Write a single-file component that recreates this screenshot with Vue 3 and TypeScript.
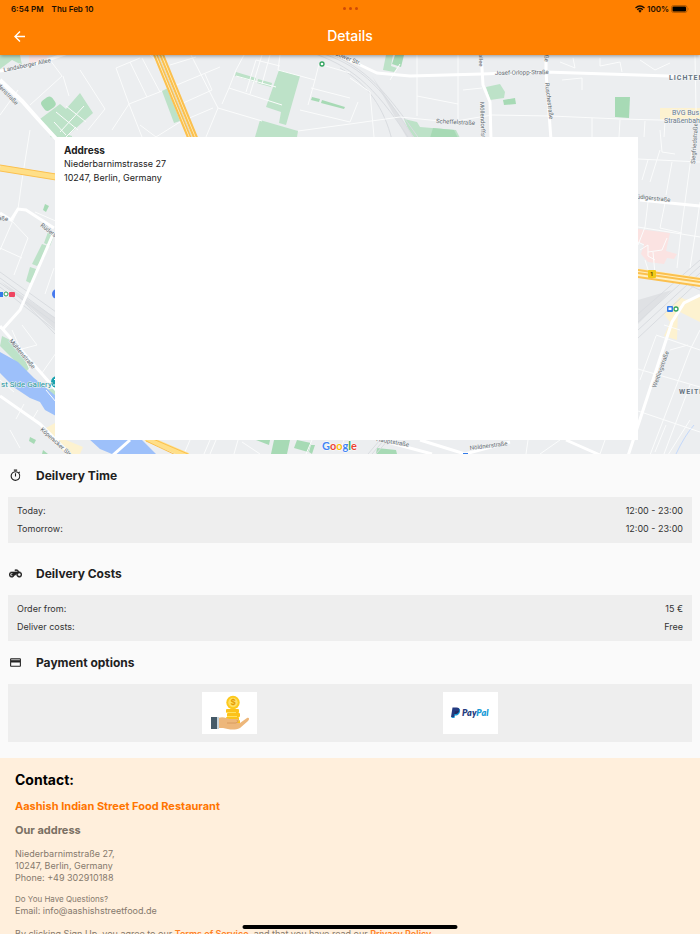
<script setup lang="ts">
interface Row {
  label: string
  value: string
}

interface MapLabel {
  text: string
  x: number
  y: number
  angle: number
  kind?: string
}

const deliveryTimes: Row[] = [
  { label: 'Today:', value: '12:00 - 23:00' },
  { label: 'Tomorrow:', value: '12:00 - 23:00' },
]

const deliveryCosts: Row[] = [
  { label: 'Order from:', value: '15 €' },
  { label: 'Deliver costs:', value: 'Free' },
]

const minorRoads: string[] = [
  'M62 76 L50 60 M62 76 L30 105 M69 96 L63 76 M80 70 L105 109 L88 130 M0 115 L18 90',
  'M116 68 L140 58 M116 68 L129 104 L162 91 M129 104 L142 137 M129 104 L112 130 M140 125 L156 137 L180 122 L213 108 M130 62 L147 97 M142 58 L160 92 M158 62 L150 55 M172 87 L220 67 M181 104 L212 90 M170 65 L196 57 M191 55 L218 108 L262 121 M205 74 L212 90 M218 108 L206 137',
  'M229 88 L236 70 L244 55 M229 88 L282 105 M236 76 L276 87 M222 104 L229 88 M246 92 L256 60 L280 66 M262 55 L250 94 M270 55 L262 84 M280 55 L278 70 L315 80 L319 64 L350 73 M315 80 L308 105 M311 88 L350 98 M298 131 L350 124 L400 117 M300 110 L350 122',
  'M417 55 L417 116 M417 96 L458 104 M458 55 L458 120 M463 90 L482 88 M350 78 L370 92 L374 137 M358 102 L350 122 M400 64 L390 80 M560 62 L575 68 L573 58 M600 58 L600 66 L620 62 L622 72 M640 60 L655 70 L670 63 M562 80 L582 78 L582 90 M592 118 L592 137 M620 120 L619 137 M645 121 L644 137 M665 122 L664 137 M695 55 L696 110',
  'M400 117 L450 122 L492 115 L551 116 L620 119 L700 121',
  'M30 130 L22 180 L18 209 M18 209 L0 250 M35 212 L58 222 M11 220 L28 238 L14 275 M0 248 L22 258 M54 268 L45 294 M22 325 L37 345 L18 350 M12 330 L30 370 M42 373 L56 353 M38 410 L32 420 M24 404 L16 419 M10 430 L20 448 M46 390 L56 402 M0 380 L14 392',
  'M638 159 L700 162 M648 160 L642 180 M660 130 L662 152 L675 154 M650 182 L660 150 M672 162 L666 195 M648 202 L645 227 L638 245 M666 198 L660 228 L682 233 M700 202 L690 268 M692 150 L681 232 L677 268 M638 227 L700 237 M638 242 L644 245 M645 260 L650 276 M655 274 L653 252',
  'M638 369 L700 387 M638 411 L700 432 M656 335 L700 350 M656 336 L640 380 M700 330 L690 350 L650 455 M670 350 L688 345 M690 420 L668 455 M666 425 L655 452 M690 385 L664 454 M605 440 L600 454 M664 325 L680 330',
  'M190 440 L184 454 M210 440 L204 454 M216 440 L210 454 M238 440 L234 454 M242 442 L260 454 M528 440 L526 454 M560 440 L540 454 M340 450 L344 440 M312 440 L306 454',
]

const mainRoads: string[] = [
  'M0 71 L30 66 L68 53',
  'M330 52 L356 63 L377 73 L410 76 L482 74 L545 72 L700 77',
  'M481 52 L483 85 L490 102 L491 140',
  'M546 52 L546 72 L551 140',
  'M0 213 L11 220 L18 209 L26 210 L54 228 M54 232 L20 310 L2 330',
  'M0 326 L56 390',
  'M0 396 L40 424 L70 454',
  'M130 440 L112 456',
  'M700 295 L684 303 L672 322 L628 456',
  'M640 200 L700 206',
  'M566 440 L600 455 M380 440 L432 454 M420 440 L465 454 L510 442',
]

const railLines: string[] = [
  'M310 52 C350 66 372 82 410 140',
  'M318 52 C356 64 380 82 415 140',
  'M326 52 C366 68 385 90 420 140',
  'M340 68 C368 84 384 108 392 140',
  'M0 272 L56 312',
  'M0 278 L56 319',
  'M0 283 L56 324',
  'M0 287 L56 331',
  'M24 302 L56 335',
  'M700 260 L638 314',
  'M700 266 L638 322',
  'M700 273 L638 330',
  'M700 280 L638 338',
  'M664 274 L700 290',
  'M368 454 L380 440 M372 454 L384 440 M376 454 L388 440',
]

const parks: string[] = [
  'M0 55 L20 55 L22 65 L12 60 L0 69 Z',
  'M40 119 L60 104 L66 109 L80 93 L93 113 L66 137 L52 137 Z',
  'M162 91 L168 88 L180 121 L174 123 Z',
  'M236 72 L256 78 L255 82 L235 76 Z',
  'M258 79 L272 83 L271 87 L257 83 Z',
  'M279 70 L300 76 L286 125 L279 123 L281 112 L266 107 Z',
  'M260 120 L298 131 L297 137 L255 137 Z',
  'M386 55 L393 55 L391 66 L397 68 L394 72 L383 70 Z',
  'M486 87 L500 84 L505 92 L504 98 L490 100 Z',
  'M404 119 L417 122 L420 127 L456 130 L460 138 L412 138 Z',
  'M50 137 L55 131 L72 136 L72 140 Z',
  'M48 232 L54 236 L50 246 L44 243 Z',
  'M42 244 L48 246 L44 258 L37 266 L32 264 Z',
  'M30 267 L36 269 L32 284 L26 281 Z',
  'M2 336 L12 341 L30 367 L26 372 L0 346 Z',
  'M46 390 L56 388 L56 396 Z',
]

const darkParks: string[] = [
  'M395 55 L404 55 L401 67 L392 64 Z',
  'M503 100 L515 98 L516 104 L504 105 Z',
  'M615 97 L630 97 L629 118 L615 117 Z',
  'M433 128 L454 130 L458 138 L430 138 Z',
  'M312 97 L320 99 L319 102 L311 100 Z',
  'M322 100 L345 107 L344 109 L321 103 Z',
  'M45 204 L49 206 L46 212 L43 210 Z',
  'M30 437 L36 440 L34 444 L29 441 Z',
  'M43 450 L48 454 L42 454 Z',
  'M256 440 L270 440 L269 445 Z',
  'M274 440 L290 440 L287 454 L271 454 Z',
  'M297 440 L311 443 L308 452 L294 448 Z',
  'M311 445 L315 445 L312 454 L309 452 Z',
  'M377 448 L396 450 L397 454 L376 454 Z',
]

const labels: MapLabel[] = [
  { text: 'Landsberger Allee', x: 4, y: 72, angle: -12 },
  { text: 'denstraße', x: -3, y: 86, angle: 46 },
  { text: 'adower Str.', x: 332, y: 54, angle: 22 },
  { text: 'Josef-Orlopp-Straße', x: 495, y: 75, angle: -1 },
  { text: 'Scheffelstraße', x: 436, y: 123, angle: 3 },
  { text: 'allee', x: 479, y: 54, angle: 90 },
  { text: 'aße', x: 544, y: 52, angle: 85 },
  { text: 'Möllendorffstr', x: 480, y: 102, angle: 88 },
  { text: 'Ruschestraße', x: 545, y: 83, angle: 83 },
  { text: 'Siegfriedstraße', x: 695, y: 164, angle: -86 },
  { text: 'Rüdigerstraße', x: 633, y: 198, angle: 6 },
  { text: 'Weitlingstraße', x: 656, y: 388, angle: -70 },
  { text: 'aße', x: -2, y: 220, angle: 6 },
  { text: 'Rüders', x: 40, y: 226, angle: 38 },
  { text: 'Mühlenstraße', x: 9, y: 341, angle: 50 },
  { text: 'Köpenicker Str.', x: 40, y: 430, angle: 42 },
  { text: 'Hauptstraße', x: 376, y: 441, angle: 10 },
  { text: 'Nöldnerstraße', x: 470, y: 450, angle: -7 },
  { text: 'LICHTEN', x: 669, y: 80, angle: 0, kind: 'district' },
  { text: 'WEITLI', x: 679, y: 394, angle: 0, kind: 'district' },
  { text: 'BVG Bus', x: 672, y: 115, angle: 0, kind: 'place' },
  { text: 'Straßenbahn', x: 664, y: 123, angle: 0, kind: 'place' },
  { text: 'st Side Gallery', x: 1, y: 387, angle: 0, kind: 'sight' },
]
</script>

<template>
  <div class="screen">
    <header class="top">
      <div class="status">
        <div class="status-left"><span>6:54 PM</span><span>Thu Feb 10</span></div>
        <div class="dots"><i></i><i></i><i></i></div>
        <div class="status-right">
          <svg class="wifi" viewBox="0 0 20 16" aria-hidden="true">
            <path d="M1 6 Q10 -2 19 6 M4.300 9.500 Q10 4.500 15.700 9.500" fill="none" stroke="#1c0e00" stroke-width="2.600" />
            <path d="M6.600 11.700 Q10 8.600 13.400 11.700 L10 15.500 Z" fill="#1c0e00" />
          </svg>
          <span>100%</span>
          <svg class="battery" viewBox="0 0 36 16" aria-hidden="true">
            <rect x="1" y="1" width="31" height="14" rx="4" fill="none" stroke="#a35200" stroke-width="1.500" />
            <rect x="3" y="3" width="27" height="10" rx="2" fill="#000" />
            <path d="M34 5.500 Q36 8 34 10.500 Z" fill="#a35200" />
          </svg>
        </div>
      </div>
      <div class="bar">
        <button class="back" type="button" aria-label="Back">
          <svg viewBox="4 4 16 16" aria-hidden="true">
            <path d="M20 11H7.830l5.590-5.590L12 4l-8 8 8 8 1.410-1.410L7.830 13H20z" fill="#fff" />
          </svg>
        </button>
        <h1>Details</h1>
      </div>
    </header>

    <main class="content">
      <section class="map">
        <svg class="map-art" viewBox="0 55 700 399" preserveAspectRatio="xMidYMid slice" aria-hidden="true">
          <rect y="55" width="700" height="399" fill="#eceef0" />
          <path d="M29 55 L49 55 L45 62 L29 65 Z M638 229 L670 233 L666 251 L677 254 L674 259 L667 258 L664 264 L648 262 L641 254 L644 244 L638 242 Z" fill="#fbe3e2" />
          <path d="M660 108 H700 V120 H660 Z M684 300 L700 297 V322 L680 312 Z M680 297 L686 300 L678 309 L677 340 L664 336 L670 322 L664 314 Z M46 428 L55 423 L56 432 L66 440 L83 447 L80 454 L66 454 L45 435 Z" fill="#fdf2d0" />
          <path v-for="d in parks" :key="d" :d="d" fill="#bde2c8" />
          <path v-for="d in darkParks" :key="d" :d="d" fill="#a7dab5" />
          <rect x="42" y="98" width="13" height="12" rx="4" transform="rotate(-35 48 104)" fill="#a7dab5" />
          <path d="M0 352 L18 362 L34 378 L56 396 L56 416 L45 410 L40 402 L30 398 L15 388 L0 373 Z M88 438 L140 438 L156 454 L112 454 L100 449 Z" fill="#9dc0fa" />
          <path d="M676 454 Q685 435 694 425" fill="none" stroke="#c3d8fb" />
          <path d="M372 76 L416 140 L408 140 Z M638 300 L672 290 L638 324 Z M0 281 L56 318 V330 Z" fill="#dfe1e4" />
          <path v-for="d in railLines" :key="d" :d="d" class="rail" />
          <path v-for="d in minorRoads" :key="d" :d="d" class="minor" />
          <path d="M56 112 L78 130 M66 106 L86 122 M54 122 L66 135 M60 132 L84 106 M66 137 L76 127 M640 250 L648 245 L648 256 L655 260 M648 252 L662 250 L667 238" class="minor" />
          <path v-for="d in mainRoads" :key="d" :d="d" class="main-road" />
          <path d="M0 80 L22 101 L38 119 L60 143" fill="none" stroke="#fff" stroke-width="4" />
          <path d="M157 52 L193 140 M638 273 L700 282" fill="none" stroke="#fff0c2" stroke-width="9" />
          <path d="M0 168 L56 177 M146 438 L188 456" fill="none" stroke="#ffdf88" stroke-width="6" />
          <path d="M153 52 L189 140 M156 52 L192 140 M159 52 L195 140 M162 52 L198 140 M638 270 L700 279 M638 273 L700 282 M638 277 L700 286" fill="none" stroke="#fbc04f" stroke-width="2" />
          <path d="M0 165 L56 174 M0 171 L56 180 M146 436 L188 454 M146 441 L178 456" fill="none" stroke="#fbc04f" stroke-width="1" />
          <path d="M157 52 L193 140" fill="none" stroke="#ddd9c7" stroke-width="1" />
          <rect x="648" y="270" width="8" height="8" rx="1" fill="#f2c918" />
          <text x="650" y="276" class="shield">1</text>
          <circle cx="322" cy="64" r="2" fill="#fff" stroke="#31a45e" stroke-width="1.300" />
          <rect x="0" y="292" width="3" height="5" fill="#337be8" />
          <circle cx="6" cy="294" r="2" fill="#fff" stroke="#31a45e" />
          <rect x="9" y="292" width="6" height="5" rx="1" fill="#ef4460" />
          <circle cx="57" cy="294" r="5" fill="#4679ee" />
          <circle cx="57" cy="382" r="6" fill="#18a1ae" />
          <path d="M54 379 L56 381 M53 385 H56" stroke="#fff" />
          <rect x="667" y="306" width="6" height="6" rx="1" fill="#337be8" />
          <path d="M668.500 307.500 H671.500 V310 H668.500 Z" fill="#fff" />
          <circle cx="676" cy="309" r="2" fill="#fff" stroke="#31a45e" stroke-width="1.300" />
          <rect x="463" y="453" width="5" height="2" fill="#337be8" />
          <text
            v-for="l in labels"
            :key="l.text"
            :class="['label', l.kind]"
            :transform="`translate(${l.x} ${l.y}) rotate(${l.angle})`"
          >{{ l.text }}</text>
          <text x="322" y="450" class="google"><tspan fill="#4285f4">G</tspan><tspan fill="#ea4335">o</tspan><tspan fill="#fbbc05">o</tspan><tspan fill="#4285f4">g</tspan><tspan fill="#34a853">l</tspan><tspan fill="#ea4335">e</tspan></text>
        </svg>
        <div class="address-card">
          <h2>Address</h2>
          <p>Niederbarnimstrasse 27</p>
          <p>10247, Berlin, Germany</p>
        </div>
      </section>

      <section class="group">
        <h2 class="heading">
          <svg viewBox="0 0 24 24" aria-hidden="true">
            <path d="M15 1H9v2h6V1zm-4 13h2V8h-2v6zm8.030-6.610l1.420-1.420c-.43-.51-.9-.99-1.410-1.410l-1.420 1.420A8.962 8.962 0 0 0 12 4c-4.970 0-9 4.030-9 9s4.020 9 9 9a8.994 8.994 0 0 0 7.030-14.610zM12 20c-3.870 0-7-3.130-7-7s3.130-7 7-7 7 3.130 7 7-3.130 7-7 7z" />
          </svg>
          Deilvery Time
        </h2>
        <dl class="panel">
          <div v-for="row in deliveryTimes" :key="row.label" class="row">
            <dt>{{ row.label }}</dt>
            <dd>{{ row.value }}</dd>
          </div>
        </dl>
      </section>

      <section class="group spaced">
        <h2 class="heading">
          <svg class="bold-icon" viewBox="0 0 24 24" aria-hidden="true">
            <path d="M19.440 9.030L15.410 5H11v2h3.590l2 2H5c-2.800 0-5 2.200-5 5s2.200 5 5 5c2.460 0 4.450-1.690 4.900-4h1.650l2.770-2.770c-.21.54-.32 1.140-.32 1.770 0 2.800 2.200 5 5 5s5-2.200 5-5c0-2.650-1.970-4.770-4.560-4.970zM7.820 15C7.400 16.150 6.280 17 5 17c-1.630 0-3-1.370-3-3s1.370-3 3-3c1.280 0 2.400.85 2.820 2H5v2h2.820zM19 17c-1.660 0-3-1.340-3-3s1.340-3 3-3 3 1.340 3 3-1.340 3-3 3z" />
          </svg>
          Deilvery Costs
        </h2>
        <dl class="panel">
          <div v-for="row in deliveryCosts" :key="row.label" class="row">
            <dt>{{ row.label }}</dt>
            <dd>{{ row.value }}</dd>
          </div>
        </dl>
      </section>

      <section class="group">
        <h2 class="heading">
          <svg viewBox="0 0 24 24" aria-hidden="true">
            <path d="M4 6h16v3H4z" opacity=".3" />
            <path d="M20 4H4c-1.110 0-1.990.89-1.990 2L2 18c0 1.110.89 2 2 2h16c1.110 0 2-.89 2-2V6c0-1.110-.89-2-2-2zm0 14H4v-6h16v6zm0-10H4V6h16v2z" />
          </svg>
          Payment options
        </h2>
        <div class="panel payments">
          <div class="tile">
            <svg viewBox="0 0 55 42" role="img" aria-label="Cash">
              <g fill="#fcc21b">
                <rect x="24" y="17" width="13" height="4" rx="1" />
                <rect x="25" y="21" width="13" height="4" rx="1" />
                <rect x="24" y="25" width="13" height="4" rx="1" />
                <rect x="26" y="28" width="12" height="4" rx="1" />
              </g>
              <path d="M24 20.500 H34 M25 24.500 H35 M24 28 H36" stroke="#ffe261" stroke-width="1" />
              <circle cx="31" cy="10.500" r="6.700" fill="#fdc91d" />
              <circle cx="31" cy="10.500" r="4.700" fill="#ffe063" />
              <text x="31" y="13" class="coin">$</text>
              <path d="M16 26 C21 24 24 26 28 27 L35 27 C38 28 37 30 34 31 L38 31 L45 26 C47 25 48 27 46 29 L38 36 C32 39 26 37 21 36 L16 36 Z" fill="#edb77b" />
              <path d="M25 31 H34 Q37 30 35 28" fill="none" stroke="#d99c60" />
              <path d="M14 25 H17 V37 H14 Z" fill="#c7d4dc" />
              <path d="M9 25 H15 V37 H9 Z" fill="#455a68" />
            </svg>
          </div>
          <div class="tile">
            <svg viewBox="0 0 55 42" role="img" aria-label="PayPal">
              <path d="M10.500 16 H14 C17 16 17.500 18 17 20 C16 23 14 23.500 12 23.500 L11.500 26 H8.500 Z" fill="#179bd7" />
              <path d="M9.500 15.500 H13.500 C16 15.500 17 17 16 19.500 C15.300 21.500 13.500 22 11.500 22 L11 25 H8 Z" fill="#253b80" />
              <path d="M12 19 H16 C15 22 13 22 11.500 22 Z" fill="#222d65" />
              <text x="19" y="24" class="paypal"><tspan fill="#253b80">Pay</tspan><tspan fill="#179bd7">Pal</tspan></text>
            </svg>
          </div>
        </div>
      </section>

      <footer class="contact">
        <h2>Contact:</h2>
        <h3 class="brand">Aashish Indian Street Food Restaurant</h3>
        <h3>Our address</h3>
        <address>
          Niederbarnimstraße 27,<br />
          10247, Berlin, Germany<br />
          Phone: +49 302910188
        </address>
        <p class="question">Do You Have Questions?</p>
        <p class="email">Email: info@aashishstreetfood.de</p>
        <p class="legal">
          By clicking Sign Up, you agree to our <a href="#terms">Terms of Service</a>, and that you have read our
          <a href="#privacy">Privacy Policy</a>.
        </p>
      </footer>
    </main>
    <div class="home-indicator"></div>
  </div>
</template>

<style>
body {
  background: #fafafa;
}
</style>

<style scoped>
.screen {
  position: relative;
  display: flex;
  flex-direction: column;
  height: 100vh;
  overflow: hidden;
  background: #fafafa;
  color: #212121;
  font-family: Inter, "Liberation Sans", sans-serif;
  font-size: 9px;
}
h1,
h2,
h3,
p,
dl,
dd {
  margin: 0;
}
.top {
  position: relative;
  z-index: 1;
  flex: none;
  background: #ff8000;
  box-shadow: 0 1px 4px rgba(0, 0, 0, 0.4);
}
.status {
  display: grid;
  grid-template-columns: 1fr auto 1fr;
  align-items: center;
  height: 17px;
  padding: 0 11px;
  color: #1c0e00;
  font-size: 8px;
  font-weight: 600;
}
.status-left {
  display: flex;
  gap: 8px;
}
.dots {
  display: flex;
  gap: 3px;
}
.dots i {
  width: 3px;
  height: 3px;
  border-radius: 50%;
  background: #cf4a06;
}
.status-right {
  display: flex;
  align-items: center;
  justify-content: flex-end;
  gap: 2px;
}
.wifi {
  width: 10px;
  height: 8px;
}
.battery {
  width: 18px;
  height: 8px;
}
.bar {
  display: grid;
  grid-template-columns: 38px 1fr 38px;
  align-items: center;
  height: 38px;
}
.back {
  display: flex;
  align-items: center;
  justify-content: center;
  height: 38px;
  padding: 0;
  border: 0;
  background: none;
  cursor: pointer;
}
.back svg {
  width: 11px;
  height: 11px;
}
.bar h1 {
  color: #fff;
  font-size: 14px;
  font-weight: 500;
  line-height: 18px;
  text-align: center;
}
.content {
  flex: 1;
  min-height: 0;
  overflow-y: auto;
  scrollbar-width: none;
}
.map {
  display: grid;
  overflow: hidden;
}
.map-art {
  grid-area: 1 / 1;
  width: 100%;
  height: 399px;
}
.rail {
  fill: none;
  stroke: #d9dce0;
  stroke-width: 1;
}
.minor {
  fill: none;
  stroke: #fbfcfc;
  stroke-width: 1;
}
.main-road {
  fill: none;
  stroke: #fff;
  stroke-width: 3;
}
.label {
  fill: #60696f;
  stroke: #f4f5f6;
  stroke-width: 1px;
  paint-order: stroke;
  font-family: Roboto, sans-serif;
  font-size: 6px;
}
.label.district {
  fill: #677583;
  font-size: 7px;
  font-weight: 700;
  letter-spacing: 1px;
}
.label.place {
  fill: #6b7b8a;
  font-size: 7px;
}
.label.sight {
  fill: #1a949d;
  font-size: 8px;
}
.shield {
  fill: #5c4a00;
  font: bold 6px Roboto, sans-serif;
}
.google {
  stroke: #fff;
  stroke-width: 1px;
  paint-order: stroke;
  font: 700 11px Lato, sans-serif;
}
.address-card {
  z-index: 0;
  grid-area: 1 / 1;
  margin: 82px 62px 14px 55px;
  padding: 6px 9px;
  background: #fff;
  line-height: 14px;
}
.address-card h2 {
  font-size: 10px;
  font-weight: 700;
}
.spaced {
  margin-top: 9px;
}
.heading {
  display: flex;
  align-items: center;
  gap: 14px;
  height: 43px;
  padding: 0 9px;
  font-size: 12px;
  font-weight: 700;
}
.heading svg {
  width: 13px;
  height: 13px;
  fill: currentColor;
}
.bold-icon {
  stroke: currentColor;
  stroke-width: 1px;
}
.panel {
  margin: 0 8px;
  padding: 5px 9px;
  background: #eee;
  color: #333;
}
.row {
  display: flex;
  justify-content: space-between;
  line-height: 18px;
}
.payments {
  display: flex;
  justify-content: space-evenly;
  padding: 8px;
}
.tile {
  width: 55px;
  height: 42px;
  background: #fff;
}
.tile svg {
  display: block;
  width: 100%;
  height: 100%;
}
.coin {
  fill: #e59b00;
  font: bold 8px Inter, sans-serif;
  text-anchor: middle;
}
.paypal {
  font: italic 800 9px Lato, sans-serif;
}
.contact {
  margin-top: 16px;
  padding: 12px 15px 24px;
  background: #ffefdc;
  color: #85796c;
}
.contact h2 {
  color: #000;
  font-size: 14px;
  font-weight: 700;
  line-height: 20px;
}
.contact h3 {
  margin-top: 8px;
  color: #7a6f63;
  font-size: 11px;
  font-weight: 700;
  line-height: 16px;
}
.contact .brand {
  color: #ff7500;
}
address {
  margin-top: 10px;
  font-style: normal;
  line-height: 12px;
}
.question {
  margin-top: 10px;
  font-size: 8px;
  line-height: 11px;
}
.email {
  line-height: 11px;
}
.legal {
  margin-top: 12px;
  line-height: 12px;
}
.legal a {
  color: #ff8227;
  font-weight: 600;
  text-decoration: none;
}
.home-indicator {
  position: absolute;
  bottom: 5px;
  left: 50%;
  width: 215px;
  height: 4px;
  border-radius: 2px;
  background: #000;
  transform: translateX(-50%);
}
</style>
